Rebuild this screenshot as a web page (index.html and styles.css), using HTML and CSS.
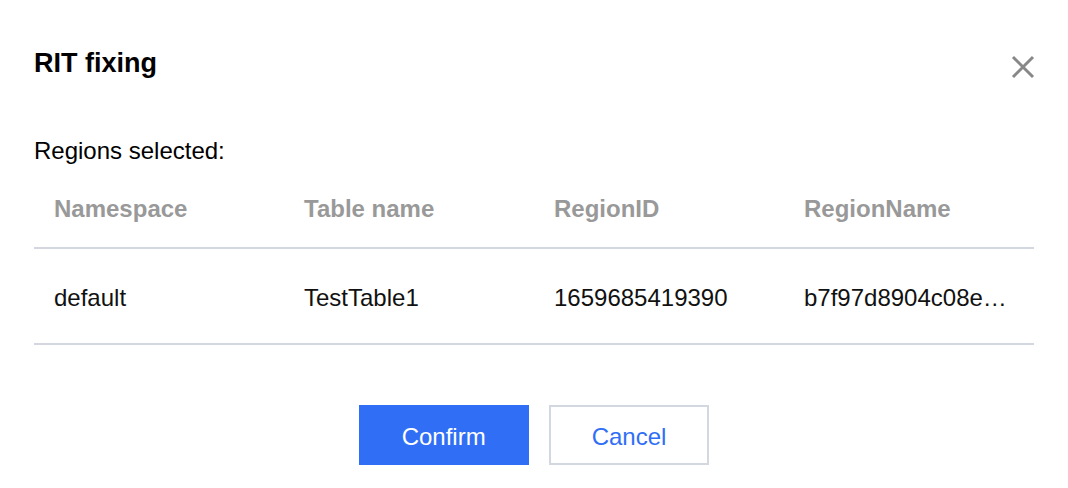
FILE: index.html
```html
<!doctype html>
<html lang="en">
<head>
<meta charset="utf-8">
<title>RIT fixing</title>
<link rel="stylesheet" href="styles.css">
</head>
<body>

	<div class="dialog">

		<div class="dialog-head">
			<h2 class="dialog-title">RIT fixing</h2>
			<button class="dialog-close" title="Close">
				<svg width="24" height="24" viewBox="0 0 24 24"><path d="M2 2 L22 22 M22 2 L2 22" stroke="#888" stroke-width="3" fill="none"/></svg>
			</button>
		</div>

		<p class="dialog-label">Regions selected:</p>

		<table class="region-table">
			<thead>
				<tr>
					<th>Namespace</th>
					<th>Table name</th>
					<th>RegionID</th>
					<th>RegionName</th>
				</tr>
			</thead>
			<tbody>
				<tr>
					<td>default</td>
					<td>TestTable1</td>
					<td>1659685419390</td>
					<td>b7f97d8904c08e…</td>
				</tr>
			</tbody>
		</table>

		<div class="dialog-foot">
			<button class="btn btn-primary">Confirm</button>
			<button class="btn btn-weak">Cancel</button>
		</div>

	</div>

</body>
</html>
```

FILE: styles.css
```css
body { background: #fff; color: #000; font: 24px "Liberation Sans", Arial, sans-serif; margin: 0; }

.dialog { padding: 45px 34px 0; }

.dialog-head { align-items: center; display: flex; justify-content: space-between; }
.dialog-title { font-size: 27px; font-weight: bold; line-height: 36px; margin: 0; }
.dialog-close { background: none; border: none; cursor: pointer; display: flex; margin: 8px -1px 0 0; padding: 0; }

.dialog-label { line-height: 36px; margin: 52px 0 0; }

.region-table { border-collapse: collapse; table-layout: fixed; width: 100%; }
.region-table th,
.region-table td { line-height: 36px; padding: 0 20px; text-align: left; white-space: nowrap; }
.region-table th { border-bottom: 2px solid #d3d8e0; color: #999; font-weight: bold; padding-top: 22px; padding-bottom: 20px; }
.region-table td { border-bottom: 2px solid #d3d8e0; color: #111; padding-top: 31px; padding-bottom: 27px; }

.dialog-foot { display: flex; gap: 20px; justify-content: center; margin-top: 60px; }

.btn { border: 2px solid transparent; cursor: pointer; font: 24px "Liberation Sans", Arial, sans-serif; height: 60px; padding: 3px 41px 0; }
.btn-primary { background: #306ef6; border-color: #306ef6; color: #fff; }
.btn-weak { background: #fff; border-color: #d3d8e0; color: #306ef6; }
```
